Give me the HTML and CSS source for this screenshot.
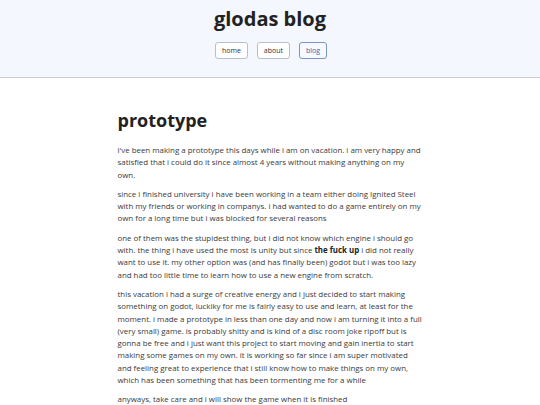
FILE: index.html
```html
<!DOCTYPE html>
<html>
<head>
<meta charset="utf-8">
<link rel="stylesheet" href="styles.css">
</head>
<body>
<header class="site-header">
  <h1 class="site-title">glodas blog</h1>
  <nav class="nav">
    <a class="nav-btn" href="#">home</a>
    <a class="nav-btn" href="#">about</a>
    <a class="nav-btn active" href="#">blog</a>
  </nav>
</header>
<main class="post">
  <h2 class="post-title">prototype</h2>
  <p>i've been making a prototype this days while i am on vacation. i am very happy and satisfied that i could do it since almost 4 years without making anything on my own.</p>
  <p>since i finished university i have been working in a team either doing Ignited Steel with my friends or working in companys. i had wanted to do a game entirely on my own for a long time but i was blocked for several reasons</p>
  <p>one of them was the stupidest thing, but i did not know which engine i should go with. the thing i have used the most is unity but since <strong>the fuck up</strong> i did not really want to use it. my other option was (and has finally been) godot but i was too lazy and had too little time to learn how to use a new engine from scratch.</p>
  <p>this vacation i had a surge of creative energy and i just decided to start making something on godot, luckiky for me is fairly easy to use and learn, at least for the moment. i made a prototype in less than one day and now i am turning it into a full (very small) game. is probably shitty and is kind of a disc room joke ripoff but is gonna be free and i just want this project to start moving and gain inertia to start making some games on my own. it is working so far since i am super motivated and feeling great to experience that i still know how to make things on my own, which has been something that has been tormenting me for a while</p>
  <p>anyways, take care and i will show the game when it is finished</p>
</main>
</body>
</html>
```
FILE: styles.css
```css
html, body {
  margin: 0;
  padding: 0;
  background: #ffffff;
  font-family: "Open Sans", "Noto Sans", sans-serif;
  color: #333333;
}
.site-header {
  background: #f4f8fe;
  border-bottom: 1px solid #c9cdd4;
  height: 78px;
  box-sizing: border-box;
  padding-top: 6px;
  text-align: center;
}
.site-title {
  margin: 0;
  font-size: 20px;
  line-height: 26px;
  font-weight: 700;
  color: #222222;
}
.nav {
  display: flex;
  justify-content: center;
  gap: 9px;
  margin-top: 10px;
  padding-left: 2px;
}
.nav-btn {
  display: inline-block;
  font-size: 7px;
  line-height: 15px;
  padding: 0 6px;
  border: 1px solid #b9bfca;
  border-radius: 3px;
  background: #ffffff;
  color: #333333;
  text-decoration: none;
}
.nav-btn.active {
  border-color: #7a96c4;
  color: #3d64a4;
  background: #f7f9fe;
}
.post {
  width: 305px;
  margin: 0 auto;
  padding-top: 30px;
}
.post-title {
  margin: 0 0 12px 0;
  font-size: 18px;
  line-height: 24px;
  font-weight: 700;
  color: #222222;
}
.post p {
  margin: 0 0 7px 0;
  font-size: 7.9px;
  line-height: 12.3px;
  color: #3a3a3a;
}
.post strong {
  color: #222222;
}
```
